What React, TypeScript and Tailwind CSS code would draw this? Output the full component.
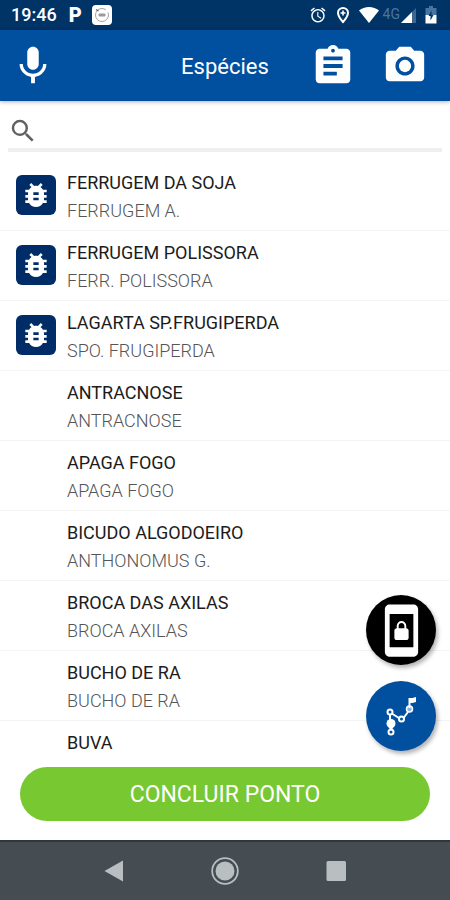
import React from 'react';
import {
  MdAlarm,
  MdAssignment,
  MdBugReport,
  MdMic,
  MdPhotoCamera,
  MdScreenLockPortrait,
  MdSearch
} from 'react-icons/md';

interface Species {
  name: string;
  shortName?: string;
  tracked?: boolean;
}

const SPECIES: Species[] = [
  { name: 'FERRUGEM DA SOJA', shortName: 'FERRUGEM A.', tracked: true },
  { name: 'FERRUGEM POLISSORA', shortName: 'FERR. POLISSORA', tracked: true },
  { name: 'LAGARTA SP.FRUGIPERDA', shortName: 'SPO. FRUGIPERDA', tracked: true },
  { name: 'ANTRACNOSE', shortName: 'ANTRACNOSE' },
  { name: 'APAGA FOGO', shortName: 'APAGA FOGO' },
  { name: 'BICUDO ALGODOEIRO', shortName: 'ANTHONOMUS G.' },
  { name: 'BROCA DAS AXILAS', shortName: 'BROCA AXILAS' },
  { name: 'BUCHO DE RA', shortName: 'BUCHO DE RA' },
  { name: 'BUVA' }
];

function StatusBar() {
  return (
    <div className="flex h-[30px] shrink-0 items-center bg-[#003366] pr-[13px] pl-[11px] text-white">
      <span className="text-[18px] leading-5 font-medium">19:46</span>
      <span className="ml-3 text-[20px] leading-5 font-black">P</span>
      <svg viewBox="0 0 20 20" className="ml-[10px] h-5 w-5" aria-hidden="true">
        <rect width="20" height="20" rx="4" fill="#fff" />
        <circle cx="10" cy="10" r="6.5" fill="none" stroke="#a3a3a3" strokeWidth="1" strokeDasharray="34 3" />
        <path d="M4 4.5l2.5 1.5" stroke="#666" strokeWidth="1.4" />
        <rect x="6.5" y="8.5" width="7" height="3" rx="1" fill="#999" />
      </svg>

      <div className="ml-auto flex items-center">
        <MdAlarm className="h-[18px] w-[18px]" aria-hidden="true" />
        <svg viewBox="0 0 14 18" className="ml-[9px] h-[18px] w-[14px]" aria-hidden="true">
          <path d="M7 2C4 2 2 4.200 2 6.800 2 10.500 7 16 7 16s5-5.500 5-9.200C12 4.200 10 2 7 2z" fill="none" stroke="#fff" strokeWidth="2" />
          <path d="M7 4.500v5M4.500 7h5" stroke="#fff" strokeWidth="1.600" />
        </svg>
        <svg viewBox="0 0 20 16" className="ml-[9px] h-4 w-5" aria-hidden="true">
          <path d="M0 3.500C2.800 1.300 6.200 0 10 0s7.200 1.300 10 3.500L10 16z" fill="#fff" />
        </svg>
        <span className="ml-1 self-start text-[14px] leading-4 text-[#4a74a0]">4G</span>
        <svg viewBox="0 0 16 16" className="ml-px h-4 w-4" aria-hidden="true">
          <path d="M15 1v15H0z" fill="#3f6690" />
          <path d="M11 5v11H0z" fill="#fff" />
        </svg>
        <svg viewBox="0 0 12 18" className="ml-2 h-[18px] w-3" aria-hidden="true">
          <path d="M4 0h4v2h3.500v7H.5V2H4z" fill="#4a74a0" />
          <path d="M.5 9h11v8.500H.5z" fill="#fff" />
          <path d="M6.500 4.500L3.500 10h2v4.500l3-5.500h-2z" fill="#003366" />
        </svg>
      </div>
    </div>
  );
}

function RouteIcon() {
  return (
    <svg viewBox="0 0 34 44" className="h-11 w-[34px]" fill="none" stroke="currentColor" strokeWidth="2" aria-hidden="true">
      <path d="M8.500 20l6.500 4M19.500 24l4.500-6M6 21v5" />
      <circle cx="6" cy="18" r="2.500" />
      <circle cx="17.500" cy="25" r="2.500" />
      <circle cx="7" cy="38" r="2.500" />
      <circle cx="7" cy="29.500" r="4.500" fill="currentColor" stroke="none" />
      <path d="M3.500 31.500h7L7 37z" fill="currentColor" stroke="none" />
      <circle cx="25.500" cy="15" r="3" fill="#8fb2dc" strokeWidth="1.500" />
      <path d="M25.500 14V4" />
      <path d="M25 4h3.500L32 3v5l-3.500 1H25z" fill="currentColor" stroke="none" />
    </svg>
  );
}

function SpeciesRow({ name, shortName, tracked }: Species) {
  return (
    <li className="flex h-[70px] shrink-0 gap-3 border-b border-[#f4f4f4] pl-4 last:h-auto last:border-b-0">
      <div className="w-10 shrink-0 pt-[14px]">
        {tracked && (
          <span className="flex h-10 w-10 items-center justify-center rounded-md bg-[#002d68] text-white">
            <MdBugReport className="h-8 w-8" aria-hidden="true" />
          </span>
        )}
      </div>
      <div className="-ml-px pt-2">
        <p className="text-[18px] leading-7 text-[#1c1c1c]">{name}</p>
        {shortName && <p className="text-[18px] leading-7 font-light text-[#555]">{shortName}</p>}
      </div>
    </li>
  );
}

export default function App() {
  return (
    <div className="relative flex h-screen flex-col overflow-hidden bg-white font-[Roboto,sans-serif]">
      <StatusBar />

      <header className="relative z-10 grid h-[71px] shrink-0 grid-cols-[1fr_auto_1fr] items-center bg-[#00509f] pr-[22px] pl-[10px] text-white shadow-[0_1px_4px_rgba(0,0,0,0.3)]">
        <button type="button" aria-label="Gravar voz" className="justify-self-start">
          <MdMic className="h-[46px] w-[46px]" />
        </button>
        <h1 className="pt-0.5 pl-3 text-[22px] leading-7">Espécies</h1>
        <div className="flex gap-[26px] justify-self-end">
          <button type="button" aria-label="Anotações">
            <MdAssignment className="h-[46px] w-[46px]" />
          </button>
          <button type="button" aria-label="Câmera">
            <MdPhotoCamera className="h-[46px] w-[46px]" />
          </button>
        </div>
      </header>

      <label className="mx-2 mt-3 flex h-[39px] shrink-0 items-center border-b-4 border-[#efefef] text-[#616161]">
        <MdSearch className="h-[30px] w-[30px]" aria-hidden="true" />
        <input type="search" aria-label="Buscar espécie" className="min-w-0 flex-1 bg-transparent px-2 text-[18px] outline-none" />
      </label>

      <ul className="mt-[9px] flex min-h-0 flex-1 flex-col overflow-hidden">
        {SPECIES.map((species) => (
          <SpeciesRow key={species.name} {...species} />
        ))}
      </ul>

      {/* Floating actions sit over the list */}
      <div className="absolute right-[14px] bottom-[149px] flex flex-col gap-4 text-white">
        <button type="button" aria-label="Bloquear tela" className="flex h-[70px] w-[70px] items-center justify-center rounded-full bg-black shadow-[2px_3px_4px_rgba(0,0,0,0.3)]">
          <MdScreenLockPortrait className="h-[57px] w-[57px]" />
        </button>
        <button type="button" aria-label="Ver trajeto" className="flex h-[70px] w-[70px] items-center justify-center rounded-full bg-[#00509f] shadow-[2px_3px_4px_rgba(0,0,0,0.3)]">
          <RouteIcon />
        </button>
      </div>

      <div className="mt-3 mb-[19px] shrink-0 px-5">
        <button type="button" className="h-[54px] w-full rounded-full bg-[#78c832] pt-0.5 text-[23px] text-white">
          CONCLUIR PONTO
        </button>
      </div>

      <nav className="flex h-[60px] shrink-0 items-center justify-center gap-[83px] border-t-2 border-[#2e373d] bg-[#454d53] text-[#b9bfc1]">
        <button type="button" aria-label="Voltar">
          <svg viewBox="0 0 28 28" className="h-7 w-7">
            <path d="M23 3.500v21L4.500 14z" fill="currentColor" />
          </svg>
        </button>
        <button type="button" aria-label="Início">
          <svg viewBox="0 0 28 28" className="h-7 w-7">
            <circle cx="14" cy="14" r="12.800" fill="none" stroke="currentColor" strokeWidth="1.800" />
            <circle cx="14" cy="14" r="9.500" fill="currentColor" />
          </svg>
        </button>
        <button type="button" aria-label="Recentes">
          <svg viewBox="0 0 28 28" className="h-7 w-7">
            <rect x="4.500" y="4" width="19.500" height="20" rx="1.500" fill="currentColor" />
          </svg>
        </button>
      </nav>
    </div>
  );
}
